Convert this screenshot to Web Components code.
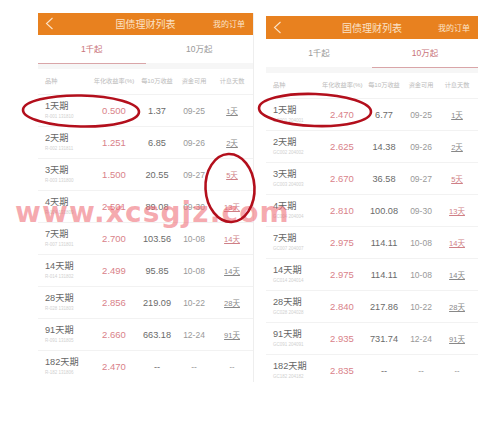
<!DOCTYPE html>
<html><head><meta charset="utf-8">
<style>
html,body{margin:0;padding:0;background:#fff}
body{width:500px;height:423px;overflow:hidden;font-family:"Liberation Sans","Noto Sans CJK SC",sans-serif}
</style></head><body>
<bond-page>
<bond-panel active="0" style="--hh:21.5px;--th:28px;--bh:6.5px;--lh:25px;--w:215px;--top:13px;--c1:53px;--c2:46px;--c3:40px;--c4:34px;--c5:42px;--edge:#eee">
<bond-row n="1天期" code="R-001 131810" r="0.500" i="1.37" d="09-25" t="1天"></bond-row>
<bond-row n="2天期" code="R-002 131811" r="1.251" i="6.85" d="09-26" t="2天"></bond-row>
<bond-row n="3天期" code="R-003 131800" r="1.500" i="20.55" d="09-27" t="5天" hot></bond-row>
<bond-row n="4天期" code="R-004 131809" r="2.501" i="89.08" d="09-30" t="13天" hot></bond-row>
<bond-row n="7天期" code="R-007 131801" r="2.700" i="103.56" d="10-08" t="14天" hot></bond-row>
<bond-row n="14天期" code="R-014 131802" r="2.499" i="95.85" d="10-08" t="14天"></bond-row>
<bond-row n="28天期" code="R-028 131803" r="2.856" i="219.09" d="10-22" t="28天"></bond-row>
<bond-row n="91天期" code="R-091 131805" r="2.660" i="663.18" d="12-24" t="91天"></bond-row>
<bond-row n="182天期" code="R-182 131806" r="2.470" i="--" d="--" t="--"></bond-row>
</bond-panel>
<bond-panel active="1" style="--hh:23px;--th:28px;--bh:6px;--lh:25px;--w:212px;--top:16px;--c1:56px;--c2:40px;--c3:44px;--c4:30px;--c5:42px;--edge:transparent">
<bond-row n="1天期" code="GC001 204001" r="2.470" i="6.77" d="09-25" t="1天"></bond-row>
<bond-row n="2天期" code="GC002 204002" r="2.625" i="14.38" d="09-26" t="2天"></bond-row>
<bond-row n="3天期" code="GC003 204003" r="2.670" i="36.58" d="09-27" t="5天" hot></bond-row>
<bond-row n="4天期" code="GC004 204004" r="2.810" i="100.08" d="09-30" t="13天" hot></bond-row>
<bond-row n="7天期" code="GC007 204007" r="2.975" i="114.11" d="10-08" t="14天" hot></bond-row>
<bond-row n="14天期" code="GC014 204014" r="2.975" i="114.11" d="10-08" t="14天"></bond-row>
<bond-row n="28天期" code="GC028 204028" r="2.840" i="217.86" d="10-22" t="28天"></bond-row>
<bond-row n="91天期" code="GC091 204091" r="2.935" i="731.74" d="12-24" t="91天"></bond-row>
<bond-row n="182天期" code="GC182 204182" r="2.835" i="--" d="--" t="--"></bond-row>
</bond-panel>
</bond-page>
<script>
const cols='display:grid;grid-template-columns:var(--c1) var(--c2) var(--c3) var(--c4) var(--c5);';
class BondPage extends HTMLElement{constructor(){super();this.attachShadow({mode:'open'}).innerHTML=`
<style>:host{display:flex;position:relative;width:500px;height:423px;box-sizing:border-box;padding-left:38px;gap:13px;align-items:flex-start}
svg{position:absolute;left:0;top:0;pointer-events:none}
.wm{position:absolute;left:15px;top:195px;font:700 28px/36px "DejaVu Sans",sans-serif;letter-spacing:1.1px;color:rgba(238,104,114,.56);white-space:nowrap;pointer-events:none}
</style><slot></slot>
<div class="wm">www.xcsgjz.com</div>
<svg width="500" height="423" fill="none" stroke="#b30f1c" stroke-width="2.6">
<ellipse cx="81" cy="111" rx="58" ry="15.5" transform="rotate(1 81 111)"/>
<ellipse cx="315" cy="110" rx="56" ry="16" transform="rotate(2 315 110)"/>
<ellipse cx="230" cy="188" rx="24.5" ry="34" transform="rotate(-3 230 188)"/>
</svg>`}}
customElements.define('bond-page',BondPage);
class BondPanel extends HTMLElement{constructor(){super();const a=this.getAttribute('active');this.attachShadow({mode:'open'}).innerHTML=`
<style>:host{display:block;width:var(--w);margin-top:var(--top);background:#fff;color:#555;box-shadow:1px 0 0 var(--edge)}
.bar{height:var(--hh);background:#e8811f;color:#fbe3c8;display:grid;grid-template-columns:1fr auto 1fr;align-items:center;font-size:10px}
.bar svg{margin-left:7px;display:block}
.my{justify-self:end;margin-right:8px;font-size:8px}
.tabs{display:grid;grid-template-columns:1fr 1fr;height:var(--th);font-size:8.5px;color:#999;text-align:center;line-height:var(--th)}
.tabs div{box-sizing:border-box;border-bottom:1px solid transparent}
.tabs .on{color:#c9737a;border-bottom:1px solid #d9a5a8}
.band{height:var(--bh);background:#f6f6f6}
.head{${cols}box-sizing:border-box;height:var(--lh);padding-bottom:2px;align-items:center;font-size:6.2px;color:#bbb;text-align:center;white-space:nowrap}
.head span:first-child{text-align:left;padding-left:7px}
::slotted(bond-row){border-top:1px solid #f2f2f2}
</style>
<div class="bar"><svg width="10" height="13" viewBox="0 0 10 13" fill="none" stroke="#fbe3c8" stroke-width="1.1"><path d="M7.5 1 1.5 6.5l6 5.5"/></svg><span>国债理财列表</span><span class="my">我的订单</span></div>
<div class="tabs"><div class="${a=='0'?'on':''}">1千起</div><div class="${a=='1'?'on':''}">10万起</div></div>
<div class="band"></div>
<div class="head"><span>品种</span><span>年化收益率(%)</span><span>每10万收益</span><span>资金可用</span><span>计息天数</span></div>
<slot></slot>`}}
customElements.define('bond-panel',BondPanel);
class BondRow extends HTMLElement{constructor(){super();const g=k=>this.getAttribute(k);const hot=this.hasAttribute('hot');const none=g('t')==='--';this.attachShadow({mode:'open'}).innerHTML=`
<style>:host{${cols}box-sizing:border-box;height:32px;align-items:center;text-align:center;color:#666}
.n{text-align:left;padding-left:7px;font-size:9.2px;line-height:11px;color:#666;white-space:nowrap}
.c{display:block;font-size:4.5px;line-height:6px;color:#d0d0d0;margin-top:2px}
.r{color:#d98289;font-size:9.5px}.i{font-size:9.2px;color:#6a6a6a;white-space:nowrap}
.d{font-size:8.5px;color:#999;white-space:nowrap}.t{font-size:7.5px;color:${hot?'#cf7f86':'#888'};text-decoration:${none?'none':'underline'}}
</style>
<div class="n">${g('n')}<span class="c">${g('code')}</span></div><span class="r">${g('r')}</span><span class="i">${g('i')}</span><span class="d">${g('d')}</span><span class="t">${g('t')}</span>`}}
customElements.define('bond-row',BondRow);
</script>
</body></html>
